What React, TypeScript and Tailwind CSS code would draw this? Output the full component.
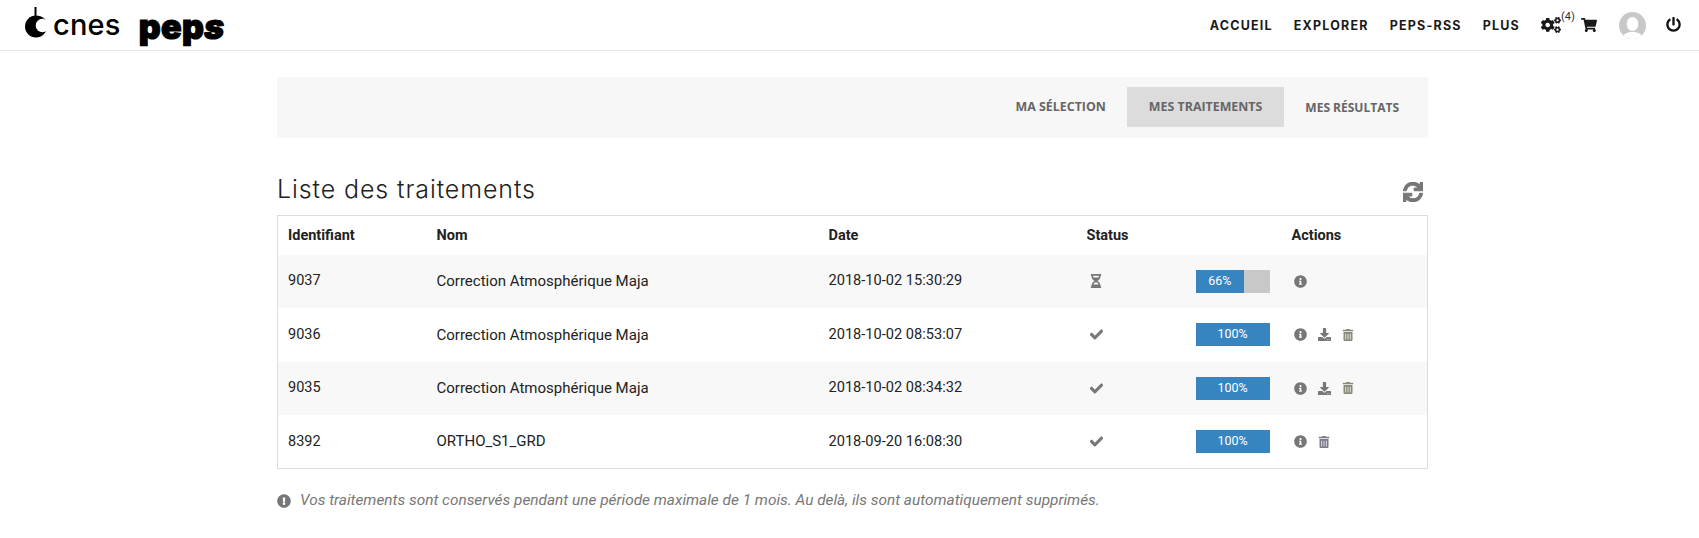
import { FaCogs, FaShoppingCart, FaPowerOff, FaInfoCircle, FaDownload, FaTrashAlt, FaCheck, FaHourglassHalf, FaSync, FaExclamationCircle } from "react-icons/fa";

type Row = { id: string; nom: string; date: string; pending?: boolean; pct: number; download?: boolean; trash?: boolean };

const rows: Row[] = [
  { id: "9037", nom: "Correction Atmosphérique Maja", date: "2018-10-02 15:30:29", pending: true, pct: 66 },
  { id: "9036", nom: "Correction Atmosphérique Maja", date: "2018-10-02 08:53:07", pct: 100, download: true, trash: true },
  { id: "9035", nom: "Correction Atmosphérique Maja", date: "2018-10-02 08:34:32", pct: 100, download: true, trash: true },
  { id: "8392", nom: "ORTHO_S1_GRD", date: "2018-09-20 16:08:30", pct: 100, trash: true },
];

function CnesMark() {
  return (
    <svg width="24" height="31" viewBox="0 0 24 31" className="block">
      <rect x="9.500" y="0" width="2" height="10" fill="#000" />
      <circle cx="11" cy="19.500" r="11" fill="#000" />
      <circle cx="17.500" cy="18.500" r="6.800" fill="#fff" />
      <path d="M14 9.500a11 11 0 0 1 7 4a8 8 0 0 0-7-4z" fill="#000" />
    </svg>
  );
}

function Avatar() {
  return (
    <svg width="27" height="27" viewBox="0 0 27 27" className="block">
      <defs>
        <clipPath id="av"><circle cx="13.500" cy="13.500" r="13.500" /></clipPath>
      </defs>
      <g clipPath="url(#av)">
        <rect width="27" height="27" fill="#c8c8c8" />
        <ellipse cx="13.500" cy="12" rx="5.800" ry="7" fill="#fff" />
        <path d="M3 27c1-6 6-7 10.500-7s9.500 1 10.500 7z" fill="#fff" />
      </g>
    </svg>
  );
}

function NavLink({ children }: { children: string }) {
  return <span className="text-[12.500px] font-bold tracking-[1.2px] text-[#1a1a1a] font-['Inter',sans-serif]">{children}</span>;
}

export default function App() {
  return (
    <div className="h-[538px] overflow-hidden bg-white font-['Roboto',sans-serif] text-[15px] text-[#222]">
      <header className="h-[51px] border-b border-[#e6e6e6] flex items-center">
        <div className="ml-[25px] flex items-end h-[31px] mt-[-6px]">
          <CnesMark />
          <span className="ml-[4px] mb-[-2px] text-[29px] leading-[31px] font-medium font-['Inter',sans-serif] text-black tracking-[0.2px]">cnes</span>
        </div>
        <span className="ml-[18px] mt-[3px] text-[34px] leading-[40px] font-black text-black font-['Inter',sans-serif] [-webkit-text-stroke:1.200px_#000] tracking-[0.4px]">
          pep<span className="italic">s</span>
        </span>
        <nav className="ml-auto mr-[18px] flex items-center">
          <div className="flex gap-[21px] items-center mt-[2px]">
            <NavLink>ACCUEIL</NavLink>
            <NavLink>EXPLORER</NavLink>
            <NavLink>PEPS-RSS</NavLink>
            <NavLink>PLUS</NavLink>
          </div>
          <div className="ml-[21px] relative w-[40px] h-[18px] flex items-center">
            <FaCogs className="text-[20px] text-[#1a1a1a]" />
            <span className="absolute left-[20px] -top-[5px] text-[11px] leading-[12px] text-[#333]">(4)</span>
          </div>
          <FaShoppingCart className="text-[16px] text-[#1a1a1a] -mt-[1px]" />
          <div className="ml-[22px]"><Avatar /></div>
          <FaPowerOff className="ml-[20px] text-[15px] text-[#111] -mt-[2px]" />
        </nav>
      </header>

      <main className="mx-[277px] w-[1151px]">
        <div className="mt-[26px] h-[61px] bg-[#f7f7f7] flex items-center justify-end pr-[8px] pb-[1px] font-bold text-[#666] font-['Open_Sans',sans-serif]">
          <div className="h-10 pt-[1px] flex items-center px-[21px] text-[12.400px]">MA SÉLECTION</div>
          <div className="h-10 pt-[1px] flex items-center px-[22px] text-[12.400px] bg-[#dcdcdc]">MES TRAITEMENTS</div>
          <div className="h-10 pt-[1px] flex items-center px-[21px] text-[12px]">MES RÉSULTATS</div>
        </div>

        <div className="mt-[33px] h-[44px] flex items-start justify-between">
          <h1 className="text-[25px] leading-[36px] text-[#222] font-['Inter',sans-serif] font-light tracking-[0.9px]">Liste des traitements</h1>
          <FaSync className="mt-[11px] mr-[5px] text-[20px] text-[#777] stroke-[30px]" />
        </div>

        <table className="w-full table-fixed border border-[#ddd] border-collapse">
          <colgroup>
            <col className="w-[149px]" />
            <col className="w-[392px]" />
            <col className="w-[258px]" />
            <col className="w-[109px]" />
            <col className="w-[96px]" />
            <col />
          </colgroup>
          <thead>
            <tr className="h-[39px] text-left text-[14.500px]">
              <th className="px-[10px] pt-[2px] font-bold">Identifiant</th>
              <th className="px-[10px] pt-[2px] font-bold">Nom</th>
              <th className="px-[10px] pt-[2px] font-bold">Date</th>
              <th className="px-[10px] pt-[2px] font-bold" colSpan={2}>Status</th>
              <th className="px-[10px] pt-[2px] font-bold">Actions</th>
            </tr>
          </thead>
          <tbody>
            {rows.map((r, i) => (
              <tr key={r.id} className={`h-[53.500px] ${i % 2 === 0 ? "bg-[#f8f8f8]" : "bg-white"}`}>
                <td className="px-[10px] text-[14.500px]">{r.id}</td>
                <td className="px-[10px]">{r.nom}</td>
                <td className="px-[10px] text-[14.600px]">{r.date}</td>
                <td className="px-[10px] text-[#777]">
                  {r.pending ? <FaHourglassHalf className="ml-[2px] text-[14px]" /> : <FaCheck className="ml-[3px] text-[13px] stroke-[25px]" />}
                </td>
                <td className="pl-[10px]">
                  <div className="w-[74px] h-[23px] bg-[#c8c8c8] flex">
                    <div
                      className="h-full bg-[#3785c0] flex items-center justify-center text-white text-[12.500px]"
                      style={{ width: `${r.pct}%` }}
                    >
                      {r.pct}%
                    </div>
                  </div>
                </td>
                <td className="px-[10px]">
                  <div className="flex items-center gap-[11px] text-[#777] pl-[2px]">
                    <FaInfoCircle className="text-[13px]" />
                    {r.download && <FaDownload className="text-[13px]" />}
                    {r.trash && <FaTrashAlt className={r.download ? "text-[#8a8a7a] text-[12px]" : "text-[#7b7b8c] text-[12px]"} />}
                  </div>
                </td>
              </tr>
            ))}
          </tbody>
        </table>

        <p className="mt-[20px] flex items-center gap-[9px] italic text-[#777] text-[15.400px]">
          <FaExclamationCircle className="text-[14px]" />
          <span>Vos traitements sont conservés pendant une période maximale de 1 mois. Au delà, ils sont automatiquement supprimés.</span>
        </p>
      </main>
    </div>
  );
}
